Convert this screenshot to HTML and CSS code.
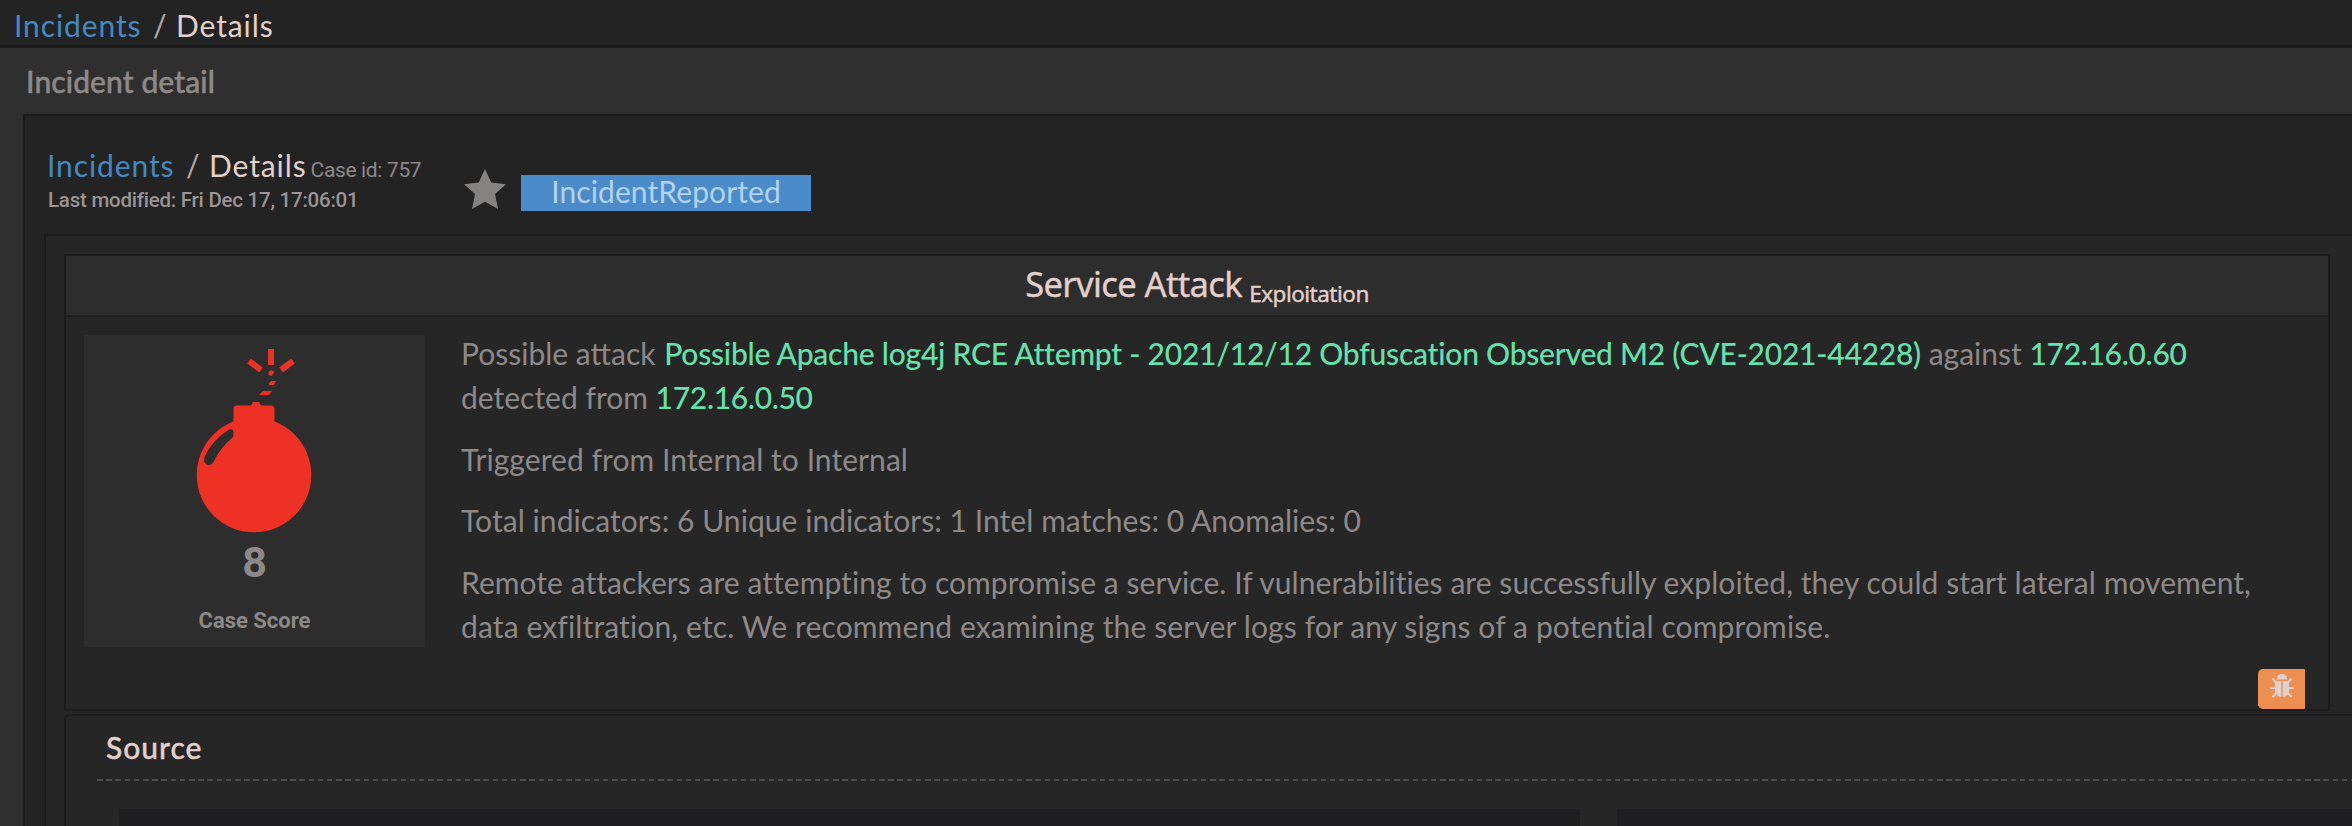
FILE: index.html
```html
<!DOCTYPE html>
<html lang="en">
<head>
<meta charset="utf-8">
<title>Incident detail</title>
<link rel="stylesheet" href="styles.css">
</head>
<body>
<header class="topbar">
  <nav class="crumbs"><a class="crumb-link">Incidents</a><span class="slash">/</span><span class="crumb-current">Details</span></nav>
</header>
<main class="page">
  <h1 class="page-title">Incident detail</h1>
  <section class="panel">
    <div class="panel-head">
      <div class="meta">
        <div class="meta-top">
          <nav class="crumbs"><a class="crumb-link">Incidents</a><span class="slash">/</span><span class="crumb-current">Details</span></nav>
          <span class="case-id">Case id: 757</span>
        </div>
        <div class="modified">Last modified: Fri Dec 17, 17:06:01</div>
      </div>
      <svg class="star" viewBox="0 0 42 40"><path d="M21 0l6.300 13.600L42 15.200 31 25l3 15-13-7.300L8 40l3-15L0 15.200l14.700-1.600z"/></svg>
      <span class="status">IncidentReported</span>
    </div>
    <div class="inner">
      <article class="card">
        <h2 class="card-title"><span class="attack">Service Attack</span><span class="kind">Exploitation</span></h2>
        <div class="card-body">
          <div class="score">
            <svg class="bomb" viewBox="0 0 116 186">
              <circle cx="58" cy="126" r="57.300"/>
              <path d="M37.500 76V60q0-3.500 3.500-3.500H55l2-3.500h6l2 3.500h10q3.500 0 3.500 3.500v16z"/>
              <path class="shine" d="M33 80.500q5-1.500 4.500 4L37 88Q24 99 17.500 113q-4 6-8.500 1-1.500-2-.5-6Q16 91 33 80.500z"/>
              <path class="spark" d="M75 0v16M53 12l12 9M97 12l-12 9"/>
              <path class="fuse" d="M75.500 21l3 2-3 4-3-1v-3zM73 34l2-2 5 0-2 4h-5zM63 46l4-4h9l-3 4z"/>
            </svg>
            <div class="score-value">8</div>
            <div class="score-label">Case Score</div>
          </div>
          <div class="summary">
            <p><span class="lead">Possible attack</span> <b class="signature">Possible Apache log4j RCE Attempt - 2021/12/12 Obfuscation Observed M2 (CVE-2021-44228)</b> <span>against</span> <b class="ip">172.16.0.60</b><br>detected from <b class="ip">172.16.0.50</b></p>
            <p class="detail">Triggered from Internal to Internal</p>
            <p class="detail">Total indicators: 6 Unique indicators: 1 Intel matches: 0 Anomalies: 0</p>
            <p class="detail">Remote attackers are attempting to compromise a service. If vulnerabilities are successfully exploited, they could start lateral movement,<br><span class="advice">data exfiltration, etc. We recommend examining the server logs for any signs of a potential compromise.</span></p>
          </div>
        </div>
        <div class="card-actions">
          <button class="bug" aria-label="Bug"><svg viewBox="0 0 24 25"><path d="M7 6.500C7 2.500 9 1 12 1s5 1.500 5 5.500z"/><path d="M5 8h6.300v16C7 23.500 5 21 5 17zM12.700 8H19v9c0 4-2 6.500-6.300 7z"/><path class="legs" d="M6 9.500L2.500 5.500M18 9.500l3.500-4M5 15H0M19 15h5M6 20l-3.500 4.200M18 20l3.500 4.200"/></svg></button>
        </div>
      </article>
      <section class="source">
        <h3 class="source-title">Source</h3>
        <div class="source-columns"><div class="slot slot-first"></div><div class="slot"></div></div>
      </section>
    </div>
  </section>
</main>
</body>
</html>
```
FILE: styles.css
```css
* { box-sizing: border-box; }
body {
  margin: 0;
  height: 826px;
  overflow: hidden;
  background: #2f2f2f;
  color: #8e8989;
  font: 30px/36px Lato, sans-serif;
  display: flex;
  flex-direction: column;
}
h1, h2, h3, p { margin: 0; }

.topbar {
  height: 48px;
  flex: none;
  padding: 7px 0 0 14px;
  background: #232323;
  border-bottom: 3px solid #1b1b1b;
}
.crumbs { display: flex; }
.crumb-link { width: 127px; color: #4389c2; letter-spacing: 0.9px; }
.slash { width: 35px; padding-left: 12px; color: #b5a9a7; }
.crumb-current { color: #e3cfcb; letter-spacing: 0.9px; }

.page { flex: 1; min-height: 0; display: flex; flex-direction: column; }
.page-title {
  height: 66px;
  flex: none;
  padding: 15px 0 0 26px;
  font-size: 30px;
  line-height: 36px;
  font-weight: 500;
  letter-spacing: 0.1px;
  -webkit-text-stroke: 0.5px currentColor;
}
.panel {
  flex: 1;
  min-height: 0;
  margin-left: 23px;
  border: 2px solid #1b1b1b;
  border-width: 2px 0 0 2px;
  background: #232323;
  display: flex;
  flex-direction: column;
}
.panel-head { height: 118px; flex: none; display: flex; align-items: flex-start; }
.meta { width: 439px; padding: 31px 0 0 22px; }
.meta-top { display: flex; align-items: baseline; }
.case-id { margin-left: 4px; font: 21px/30px Roboto, sans-serif; letter-spacing: -0.35px; }
.modified {
  padding-left: 1px;
  margin-top: -1px;
  font: 500 20.500px/32px Roboto, sans-serif;
  letter-spacing: -0.24px;
  color: #9a9494;
  white-space: nowrap;
}
.star { width: 42px; height: 40px; margin-top: 53px; fill: #858282; }
.status {
  width: 290px;
  height: 36px;
  margin: 59px 0 0 15px;
  background: #4b8bc9;
  color: #b3d2ef;
  line-height: 33px;
  text-align: center;
  letter-spacing: 0.1px;
}

.inner {
  flex: 1;
  min-height: 0;
  margin-left: 19px;
  padding: 18px 0 0 18px;
  border: 2px solid #1c1c1c;
  border-width: 2px 0 0 2px;
  background: #262626;
  display: flex;
  flex-direction: column;
}
.card {
  width: 2266px;
  height: 457px;
  flex: none;
  border: 2px solid #1c1c1c;
  display: flex;
  flex-direction: column;
}
.card-title {
  height: 61px;
  flex: none;
  background: #2d2d2d;
  border-bottom: 2px solid #1f1f1f;
  display: flex;
  justify-content: center;
  align-items: baseline;
  gap: 7px;
  color: #e3cfcb;
  font-family: "Noto Sans", sans-serif;
  font-weight: 400;
}
.attack { font-size: 34.500px; line-height: 56px; letter-spacing: -0.6px; -webkit-text-stroke: 0.4px currentColor; }
.kind { font-size: 22.500px; line-height: 30px; letter-spacing: -0.5px; position: relative; top: 5px; -webkit-text-stroke: 0.4px currentColor; }
.card-body { display: flex; padding: 18px 0 0 18px; }
.score {
  width: 341px;
  height: 312px;
  background: #2d2d2d;
  padding-top: 14px;
  display: flex;
  flex-direction: column;
  align-items: center;
  font-family: Roboto, sans-serif;
  font-weight: 700;
}
.bomb { width: 116px; height: 186px; margin-right: 2px; fill: #ee3124; overflow: visible; }
.bomb .shine { fill: #2d2d2d; }
.bomb .spark { fill: none; stroke: #ee3124; stroke-width: 6; }
.score-value { margin-top: 3px; font-size: 43px; line-height: 48px; }
.score-label { margin-top: 20px; font-size: 22px; line-height: 30px; }
.summary {
  padding-left: 36px;
  margin-top: -4px;
  display: flex;
  flex-direction: column;
  gap: 17.500px;
  line-height: 44px;
  white-space: nowrap;
}
.summary b { font-weight: 500; color: #62e2ac; }
.lead { margin-right: 1px; }
.signature { letter-spacing: -0.225px; }
.ip { letter-spacing: -0.3px; }
.detail { letter-spacing: 0.060px; }
.advice { letter-spacing: 0.130px; }
.card-actions { flex: 1; display: flex; justify-content: flex-end; align-items: flex-end; padding-right: 23px; }
.bug {
  width: 47px;
  height: 40px;
  padding: 4px 0 0 12px;
  border: 0;
  border-radius: 5px 1px 1px 5px;
  background: #ec8f50;
  display: flex;
}
.bug svg { width: 24px; height: 25px; fill: #dfd0d0; }
.legs { fill: none; stroke: #dfd0d0; stroke-width: 2; }

.source {
  flex: 1;
  min-height: 0;
  margin-top: 3px;
  border: 2px solid #1c1c1c;
  border-width: 2px 0 0 2px;
  border-radius: 5px 0 0 0;
  padding: 12px 0 0 31px;
  display: flex;
  flex-direction: column;
}
.source-title {
  height: 53px;
  flex: none;
  padding: 1px 0 0 9px;
  color: #e3cfcb;
  font-size: 30px;
  line-height: 36px;
  font-weight: 500;
  letter-spacing: 1px;
  -webkit-text-stroke: 0.4px currentColor;
  background: repeating-linear-gradient(90deg, #4c4c4c 0 5.500px, transparent 5.500px 9.200px) left bottom / 100% 2px no-repeat;
}
.source-columns { flex: 1; display: flex; gap: 37px; padding: 28px 0 0 22px; }
.slot { flex: 1; background: #1f1f21; }
.slot-first { flex: none; width: 1461px; }
```
